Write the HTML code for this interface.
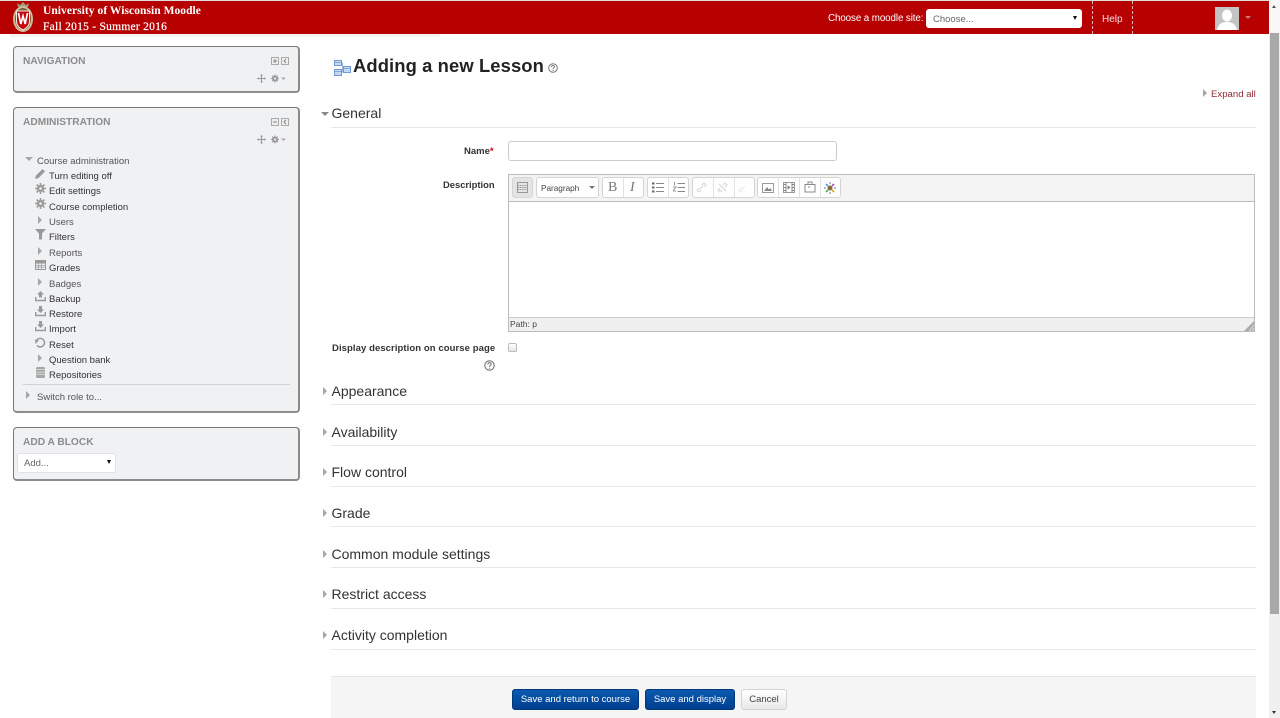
<!DOCTYPE html>
<html><head><meta charset="utf-8"><title>Adding a new Lesson</title>
<style>
html,body{margin:0;padding:0;background:#fff;width:1280px;height:718px;overflow:hidden}
body{font-family:"Liberation Sans",Arial,sans-serif;position:relative;color:#333}
.a{position:absolute;white-space:nowrap}
.blk{position:absolute;left:13px;width:284px;background:#f0f1f3;border:1px solid #777;border-bottom:2px solid #8c8c8c;border-right:2px solid #8c8c8c;border-radius:4px}
.bt{position:absolute;left:23px;font-size:10.2px;font-weight:bold;color:#8c8c8c;white-space:nowrap;line-height:12px}
.it{position:absolute;left:49px;font-size:9.5px;line-height:12px;color:#333;white-space:nowrap}
.ic{position:absolute}
.sec{position:absolute;left:331.5px;font-size:14px;line-height:16px;color:#333;white-space:nowrap}
.ln{position:absolute;left:331px;width:925px;height:1px;background:#e8e8e8}
.tri{position:absolute;width:0;height:0;border-top:4px solid transparent;border-bottom:4px solid transparent;border-left:4px solid #a6a6a6}
.tb{position:absolute;top:177px;height:21px;background:#fff;border:1px solid #d4d4d4;border-radius:3px;box-sizing:border-box}
.sep{position:absolute;top:178px;width:1px;height:19px;background:#e2e2e2}
.btn{position:absolute;top:689px;height:19px;border-radius:3px;font-size:9.5px;line-height:20px;text-align:center;color:#fff;background:linear-gradient(#0a5ab0,#003f8e);border:1px solid #04387c}
</style></head><body>

<!-- Header -->
<div class="a" style="left:0;top:0;width:1269px;height:1px;background:#ddd"></div>
<div class="a" style="left:0;top:1px;width:1269px;height:33px;background:#b70000"></div>
<div class="a" style="left:10px;top:34px;width:430px;height:3px;background:#f2f2f2"></div>
<svg class="ic" style="left:12px;top:1px" width="22" height="33" viewBox="0 0 22 33">
<path d="M6 6L5 2L8 4L11 1L14 4L17 2L16 6Z" fill="#a89878"/>
<ellipse cx="11" cy="18" rx="10" ry="13" fill="#c9bd9e"/>
<ellipse cx="11" cy="18" rx="8" ry="11" fill="#7a5c3c"/>
<path d="M4.500 10H17.500V20C17.500 25 14 27.500 11 29C8 27.500 4.500 25 4.500 20Z" fill="#c5050c" stroke="#f3eee4" stroke-width="1"/>
<path d="M6.500 12L8.800 23L11 15L13.200 23L15.500 12" fill="none" stroke="#fff" stroke-width="1.700"/>
</svg>
<div class="a" style="left:43px;top:4px;font:bold 11.5px/14px 'Liberation Serif',serif;color:#fff;letter-spacing:.05px">University of Wisconsin Moodle</div>
<div class="a" style="left:43px;top:20px;font:11.5px/14px 'Liberation Serif',serif;color:#fff;letter-spacing:.26px;-webkit-text-stroke:.2px #fff">Fall 2015 - Summer 2016</div>
<div class="a" style="left:828px;top:12px;font-size:9.8px;line-height:14px;color:#fff;letter-spacing:-.1px">Choose a moodle site:</div>
<div class="a" style="left:926px;top:9px;width:156px;height:19px;background:#fff;border-radius:3px;font-size:9.5px;line-height:21px;color:#666;text-indent:7px">Choose...</div>
<div class="a" style="left:1073px;top:16px;width:0;height:0;border-left:2.500px solid transparent;border-right:2.500px solid transparent;border-top:4px solid #111"></div>
<div class="a" style="left:1092px;top:1px;height:33px;border-left:1px dashed #e9b3b3"></div>
<div class="a" style="left:1132px;top:1px;height:33px;border-left:1px dashed #e9b3b3"></div>
<div class="a" style="left:1102px;top:13px;font-size:10px;line-height:13px;color:#f5dede">Help</div>
<svg class="ic" style="left:1215px;top:7px" width="24" height="23" viewBox="0 0 24 23"><rect width="24" height="23" fill="#c4c4c4"/><ellipse cx="12" cy="8.500" rx="5" ry="6" fill="#fff"/><path d="M2 23C3 17 7 15 12 15S21 17 22 23Z" fill="#fff"/></svg>
<div class="a" style="left:1245px;top:16px;width:0;height:0;border-left:3px solid transparent;border-right:3px solid transparent;border-top:3px solid #d97a7a"></div>

<!-- Scrollbar -->
<div class="a" style="left:1269px;top:0;width:11px;height:718px;background:#f0f0f0"></div>
<div class="a" style="left:1269px;top:0;width:11px;height:33px;background:#f8f8f8"></div>
<div class="a" style="left:1272px;top:5px;width:0;height:0;border-left:2.500px solid transparent;border-right:2.500px solid transparent;border-bottom:3px solid #555"></div>
<div class="a" style="left:1270px;top:33px;width:9px;height:581px;background:#a8a8a8"></div>
<div class="a" style="left:1272px;top:711px;width:0;height:0;border-left:2.500px solid transparent;border-right:2.500px solid transparent;border-top:3px solid #333"></div>

<!-- Navigation block -->
<div class="blk" style="top:46px;height:44px"></div>
<div class="bt" style="top:56px">NAVIGATION</div>
<svg class="ic" style="left:271px;top:57px" width="18" height="9" viewBox="0 0 18 9"><rect x=".5" y=".5" width="7" height="7" fill="#eee" stroke="#aaa"/><path d="M2 4H6M4 2V6" stroke="#888"/><rect x="10.500" y=".5" width="7" height="7" fill="#eee" stroke="#aaa"/><path d="M15 2L13 4L15 6" fill="none" stroke="#888"/></svg>
<svg class="ic" style="left:257px;top:74px" width="32" height="10" viewBox="0 0 32 10"><path d="M4.500 1V8M1 4.500H8" stroke="#999" stroke-width="1.100"/><path d="M4.500 0L6 1.500H3ZM4.500 9L6 7.500H3ZM0 4.500L1.500 3V6ZM9 4.500L7.500 3V6Z" fill="#999"/><circle cx="18" cy="4.500" r="3" fill="#999"/><circle cx="18" cy="4.500" r="1.100" fill="#f0f1f3"/><path d="M18 .5V2M18 7V8.500M14 4.500H15.500M20.500 4.500H22M15.200 1.700L16 2.500M20 6.500L20.800 7.300M20.800 1.700L20 2.500M16 6.500L15.200 7.300" stroke="#999" stroke-width="1.100"/><path d="M24 3.500H29L26.500 6Z" fill="#aaa"/></svg>

<!-- Administration block -->
<div class="blk" style="top:107px;height:303px"></div>
<div class="bt" style="top:117px">ADMINISTRATION</div>
<svg class="ic" style="left:271px;top:118px" width="18" height="9" viewBox="0 0 18 9"><rect x=".5" y=".5" width="7" height="7" fill="#eee" stroke="#aaa"/><path d="M2 4H6" stroke="#888"/><rect x="10.500" y=".5" width="7" height="7" fill="#eee" stroke="#aaa"/><path d="M15 2L13 4L15 6" fill="none" stroke="#888"/></svg>
<svg class="ic" style="left:257px;top:135px" width="32" height="10" viewBox="0 0 32 10"><path d="M4.500 1V8M1 4.500H8" stroke="#999" stroke-width="1.100"/><path d="M4.500 0L6 1.500H3ZM4.500 9L6 7.500H3ZM0 4.500L1.500 3V6ZM9 4.500L7.500 3V6Z" fill="#999"/><circle cx="18" cy="4.500" r="3" fill="#999"/><circle cx="18" cy="4.500" r="1.100" fill="#f0f1f3"/><path d="M18 .5V2M18 7V8.500M14 4.500H15.500M20.500 4.500H22M15.200 1.700L16 2.500M20 6.500L20.800 7.300M20.800 1.700L20 2.500M16 6.500L15.200 7.300" stroke="#999" stroke-width="1.100"/><path d="M24 3.500H29L26.500 6Z" fill="#aaa"/></svg>

<div class="a" style="left:25px;top:157px;width:0;height:0;border-left:4px solid transparent;border-right:4px solid transparent;border-top:4px solid #a6a6a6"></div>
<div class="it" style="left:37px;top:156px;color:#555">Course administration</div>

<svg class="ic" style="left:35px;top:168px" width="11" height="11" viewBox="0 0 11 11"><path d="M0 11L1 7.500L7.500 1L10 3.500L3.500 10Z" fill="#999"/></svg>
<div class="it" style="top:171px">Turn editing off</div>
<svg class="ic" style="left:35px;top:183px" width="11" height="11" viewBox="0 0 11 11"><circle cx="5.500" cy="5.500" r="3.600" fill="#999"/><circle cx="5.500" cy="5.500" r="1.300" fill="#f0f1f3"/><path d="M5.500 0V2M5.500 9V11M0 5.500H2M9 5.500H11M1.600 1.600L3 3M8 8L9.400 9.400M9.400 1.600L8 3M3 8L1.600 9.400" stroke="#999" stroke-width="1.600"/></svg>
<div class="it" style="top:186px">Edit settings</div>
<svg class="ic" style="left:35px;top:198px" width="11" height="11" viewBox="0 0 11 11"><circle cx="5.500" cy="5.500" r="3.600" fill="#999"/><circle cx="5.500" cy="5.500" r="1.300" fill="#f0f1f3"/><path d="M5.500 0V2M5.500 9V11M0 5.500H2M9 5.500H11M1.600 1.600L3 3M8 8L9.400 9.400M9.400 1.600L8 3M3 8L1.600 9.400" stroke="#999" stroke-width="1.600"/></svg>
<div class="it" style="top:202px">Course completion</div>
<div class="tri" style="left:38px;top:216px"></div>
<div class="it" style="top:217px;color:#555">Users</div>
<svg class="ic" style="left:35px;top:229px" width="11" height="11" viewBox="0 0 11 11"><path d="M0 0H11L7 4.500V10.500L4 10.500V4.500Z" fill="#999"/></svg>
<div class="it" style="top:232px">Filters</div>
<div class="tri" style="left:38px;top:247px"></div>
<div class="it" style="top:248px;color:#555">Reports</div>
<svg class="ic" style="left:35px;top:260px" width="11" height="11" viewBox="0 0 11 11"><rect width="11" height="10" fill="#999"/><path d="M1 3.500H10V9H1Z" fill="#f0f1f3"/><path d="M1 5.300H10M1 7.100H10M3.500 3.500V9M6.500 3.500V9" stroke="#999" stroke-width=".7"/></svg>
<div class="it" style="top:263px">Grades</div>
<div class="tri" style="left:38px;top:278px"></div>
<div class="it" style="top:279px;color:#555">Badges</div>
<svg class="ic" style="left:35px;top:291px" width="11" height="11" viewBox="0 0 11 11"><path d="M5.500 0L9 3.500H7V6.500H4V3.500H2Z" fill="#999"/><path d="M.7 6V9.500H10.300V6" fill="none" stroke="#999" stroke-width="1.400"/></svg>
<div class="it" style="top:294px">Backup</div>
<svg class="ic" style="left:35px;top:306px" width="11" height="11" viewBox="0 0 11 11"><path d="M5.500 7L9 3.500H7V0H4V3.500H2Z" fill="#999"/><path d="M.7 6V9.500H10.300V6" fill="none" stroke="#999" stroke-width="1.400"/></svg>
<div class="it" style="top:309px">Restore</div>
<svg class="ic" style="left:35px;top:321px" width="11" height="11" viewBox="0 0 11 11"><path d="M5.500 7L9 3.500H7V0H4V3.500H2Z" fill="#999"/><path d="M.7 6V9.500H10.300V6" fill="none" stroke="#999" stroke-width="1.400"/></svg>
<div class="it" style="top:324px">Import</div>
<svg class="ic" style="left:35px;top:337px" width="11" height="11" viewBox="0 0 11 11"><path d="M2 8.500A4.300 4.300 0 1 0 1.500 3.500" fill="none" stroke="#999" stroke-width="1.500"/><path d="M0 2.500L4 3.500L0.500 7Z" fill="#999"/></svg>
<div class="it" style="top:340px">Reset</div>
<div class="tri" style="left:38px;top:354px"></div>
<div class="it" style="top:355px">Question bank</div>
<svg class="ic" style="left:36px;top:367px" width="9" height="11" viewBox="0 0 9 11"><rect width="9" height="11" rx="1.500" fill="#a6a6a6"/><path d="M0 2.700H9M0 5.200H9M0 7.700H9" stroke="#f0f1f3" stroke-width=".7"/></svg>
<div class="it" style="top:370px">Repositories</div>
<div class="a" style="left:23px;top:384px;width:267px;height:1px;background:#d2d2d2"></div>
<div class="tri" style="left:26px;top:391px"></div>
<div class="it" style="left:37px;top:392px;color:#555">Switch role to...</div>

<!-- Add a block -->
<div class="blk" style="top:427px;height:51px"></div>
<div class="bt" style="top:437px">ADD A BLOCK</div>
<div class="a" style="left:17px;top:453px;width:99px;height:20px;background:#fff;border:1px solid #e2e2e2;box-sizing:border-box;border-radius:3px;font-size:9.5px;line-height:19px;color:#666;text-indent:6px">Add...</div>
<div class="a" style="left:107px;top:460px;width:0;height:0;border-left:2.500px solid transparent;border-right:2.500px solid transparent;border-top:4px solid #111"></div>

<!-- Title -->
<svg class="ic" style="left:333px;top:59px" width="18" height="18" viewBox="0 0 18 18"><g fill="#c5d9f1" stroke="#6f9bd1"><rect x="1.500" y="1.500" width="7" height="5"/><rect x="1.500" y="10.500" width="7" height="6"/><rect x="10.500" y="7.500" width="7" height="6"/></g><path d="M2 3.500H8M2 12.500H8M11 9.500H17" stroke="#6f9bd1" stroke-width=".8"/><path d="M8.500 4H9.500V13H8.500M9.500 10H10.500" fill="none" stroke="#6f9bd1" stroke-width=".7"/></svg>
<div class="a" style="left:353px;top:55px;font-size:18.4px;line-height:21px;font-weight:bold;color:#222;letter-spacing:.1px">Adding a new Lesson</div>
<svg class="ic" style="left:548px;top:63px" width="10" height="10" viewBox="0 0 10 10"><circle cx="5" cy="5" r="4.300" fill="none" stroke="#777"/><path d="M3.500 4C3.500 2 6.500 2 6.500 3.800C6.500 5 5 4.800 5 6.200" fill="none" stroke="#777"/><rect x="4.500" y="7" width="1" height="1" fill="#777"/></svg>

<div class="tri" style="left:1203px;top:89px"></div>
<div class="a" style="left:1211px;top:88px;font-size:9.6px;line-height:13px;color:#8f2a35">Expand all</div>

<!-- General -->
<div class="a" style="left:321px;top:112px;width:0;height:0;border-left:4px solid transparent;border-right:4px solid transparent;border-top:4px solid #888"></div>
<div class="sec" style="top:105px">General</div>
<div class="ln" style="top:127px"></div>

<div class="a" style="left:464px;top:146px;font-size:9.5px;line-height:12px;font-weight:bold;color:#333">Name<span style="color:#c00">*</span></div>
<div class="a" style="left:508px;top:141px;width:329px;height:20px;background:#fff;border:1px solid #ccc;border-radius:3px;box-sizing:border-box"></div>
<div class="a" style="left:443px;top:179px;font-size:9.4px;line-height:12px;font-weight:bold;color:#333">Description</div>

<!-- Editor -->
<div class="a" style="left:508px;top:174px;width:747px;height:158px;border:1px solid #bbb;box-sizing:border-box;background:#fff"></div>
<div class="a" style="left:509px;top:175px;width:745px;height:26px;background:#f4f4f4;border-bottom:1px solid #bbb"></div>
<div class="a" style="left:509px;top:317px;width:745px;height:14px;background:#f0f0f0;border-top:1px solid #ccc;box-sizing:border-box;font-size:8.500px;line-height:13px;color:#444;text-indent:1px">Path: p</div>
<svg class="ic" style="left:1244px;top:320px" width="10" height="11" viewBox="0 0 10 11"><path d="M10 1V11H0Z" fill="#aaa"/><path d="M10 5L5 11M10 8L8 11" stroke="#eee" stroke-width=".7"/></svg>

<div class="tb" style="left:512px;width:21px;background:#e4e4e4"></div>
<svg class="ic" style="left:517px;top:182px" width="11" height="11" viewBox="0 0 11 11"><rect x=".5" y=".5" width="10" height="10" fill="none" stroke="#999"/><path d="M1 3.500H10M1 5.500H10M1 7.500H10" stroke="#999" stroke-dasharray="1.200 .6"/></svg>
<div class="tb" style="left:536px;width:63px"></div>
<div class="a" style="left:541px;top:183px;font-size:8.200px;line-height:11px;color:#444">Paragraph</div>
<div class="a" style="left:589px;top:186px;width:0;height:0;border-left:3.500px solid transparent;border-right:3.500px solid transparent;border-top:3.500px solid #777"></div>
<div class="tb" style="left:602px;width:42px"></div><div class="sep" style="left:623px"></div>
<div class="a" style="left:608px;top:180px;font:14px/16px 'Liberation Serif',serif;color:#777">B</div>
<div class="a" style="left:630px;top:180px;font:italic 14px/16px 'Liberation Serif',serif;color:#777">I</div>
<div class="tb" style="left:647px;width:42px"></div><div class="sep" style="left:668px"></div>
<svg class="ic" style="left:652px;top:182px" width="12" height="11" viewBox="0 0 12 11"><path d="M0 1.500H2.500M0 5.500H2.500M0 9.500H2.500" stroke="#666" stroke-width="2"/><path d="M4 1.500H12M4 5.500H12M4 9.500H12" stroke="#888" stroke-width="1"/></svg>
<svg class="ic" style="left:673px;top:182px" width="12" height="11" viewBox="0 0 12 11"><path d="M1.500 0V3.500M0 5H3L0 9H3" fill="none" stroke="#999"/><path d="M4.500 1.500H12M4.500 5.500H12M4.500 9.500H12" stroke="#888"/></svg>
<div class="tb" style="left:692px;width:63px"></div><div class="sep" style="left:713px"></div><div class="sep" style="left:734px"></div>
<svg class="ic" style="left:696px;top:182px" width="55" height="11" viewBox="0 0 55 11"><g fill="none" stroke="#d8d8d8" stroke-width="1.200"><path d="M3 6L1 8L3 10L5 8M4 7L7 4M6 3L8 1L10 3L8 5"/><path d="M24 6L22 8L24 10L26 8M27 3L29 1L31 3L29 5M23 2L30 9"/><path d="M45 6L43 8L45 10L47 8M46 7L49 4" stroke="#ececec"/></g></svg>
<div class="tb" style="left:757px;width:84px"></div><div class="sep" style="left:778px"></div><div class="sep" style="left:799px"></div><div class="sep" style="left:820px"></div>
<svg class="ic" style="left:762px;top:182px" width="12" height="11" viewBox="0 0 12 11"><rect x=".5" y="1.500" width="11" height="9" fill="none" stroke="#999"/><path d="M2 9L5 5L7 7.500L8.500 6L10 9Z" fill="#888"/></svg>
<svg class="ic" style="left:783px;top:182px" width="12" height="11" viewBox="0 0 12 11"><rect x=".5" y=".5" width="11" height="10" fill="none" stroke="#999"/><path d="M3 .5V10.500M9 .5V10.500" stroke="#888"/><path d="M4.500 3.500L7.500 5.500L4.500 7.500Z" fill="#777"/><path d="M1 2.500H2.500M1 5.500H2.500M1 8.500H2.500M9.500 2.500H11M9.500 5.500H11M9.500 8.500H11" stroke="#888"/></svg>
<svg class="ic" style="left:804px;top:181px" width="12" height="12" viewBox="0 0 12 12"><path d="M1 3.500H11V11H1Z" fill="none" stroke="#888"/><path d="M4 3.500V1H8V3.500" fill="none" stroke="#888"/><path d="M5 5V7" stroke="#888"/></svg>
<svg class="ic" style="left:824px;top:182px" width="12" height="12" viewBox="0 0 12 12"><circle cx="6" cy="6" r="2.500" fill="#8a6b3d"/><path d="M2 2L4 4" stroke="#3aa6c9" stroke-width="1.600"/><path d="M10 2L8 4" stroke="#b14ac0" stroke-width="1.600"/><path d="M2 10L4 8" stroke="#4aae4a" stroke-width="1.600"/><path d="M10 10L8 8" stroke="#d9a520" stroke-width="1.600"/><path d="M6 0V2M6 10V12M0 6H2M10 6H12" stroke="#5f7fb5"/></svg>

<!-- Display description -->
<div class="a" style="left:332px;top:343px;font-size:9.500px;line-height:12px;font-weight:bold;color:#333;letter-spacing:.08px">Display description on course page</div>
<svg class="ic" style="left:484px;top:360px" width="11" height="11" viewBox="0 0 10 10"><circle cx="5" cy="5" r="4.300" fill="none" stroke="#777"/><path d="M3.500 4C3.500 2 6.500 2 6.500 3.800C6.500 5 5 4.800 5 6.200" fill="none" stroke="#777"/><rect x="4.500" y="7" width="1" height="1" fill="#777"/></svg>
<div class="a" style="left:508px;top:343px;width:7px;height:7px;border:1px solid #bbb;border-radius:2px;background:linear-gradient(#fff,#e6e6e6)"></div>

<!-- Collapsed sections -->
<div class="tri" style="left:322.5px;top:387px"></div><div class="sec" style="top:383px">Appearance</div><div class="ln" style="top:404px"></div>
<div class="tri" style="left:322.5px;top:428px"></div><div class="sec" style="top:424px">Availability</div><div class="ln" style="top:445px"></div>
<div class="tri" style="left:322.5px;top:468px"></div><div class="sec" style="top:464px">Flow control</div><div class="ln" style="top:486px"></div>
<div class="tri" style="left:322.5px;top:509px"></div><div class="sec" style="top:505px">Grade</div><div class="ln" style="top:526px"></div>
<div class="tri" style="left:322.5px;top:550px"></div><div class="sec" style="top:546px">Common module settings</div><div class="ln" style="top:567px"></div>
<div class="tri" style="left:322.5px;top:590px"></div><div class="sec" style="top:586px">Restrict access</div><div class="ln" style="top:608px"></div>
<div class="tri" style="left:322.5px;top:631px"></div><div class="sec" style="top:627px">Activity completion</div><div class="ln" style="top:649px"></div>

<!-- Footer buttons -->
<div class="a" style="left:331px;top:676px;width:925px;height:42px;background:#f5f5f5;border-top:1px solid #e6e6e6;box-sizing:border-box"></div>
<div class="btn" style="left:512px;width:125px">Save and return to course</div>
<div class="btn" style="left:645px;width:88px">Save and display</div>
<div class="btn" style="left:741px;width:44px;background:linear-gradient(#fff,#e8e8e8);border-color:#d4d4d4;color:#444">Cancel</div>

</body></html>
